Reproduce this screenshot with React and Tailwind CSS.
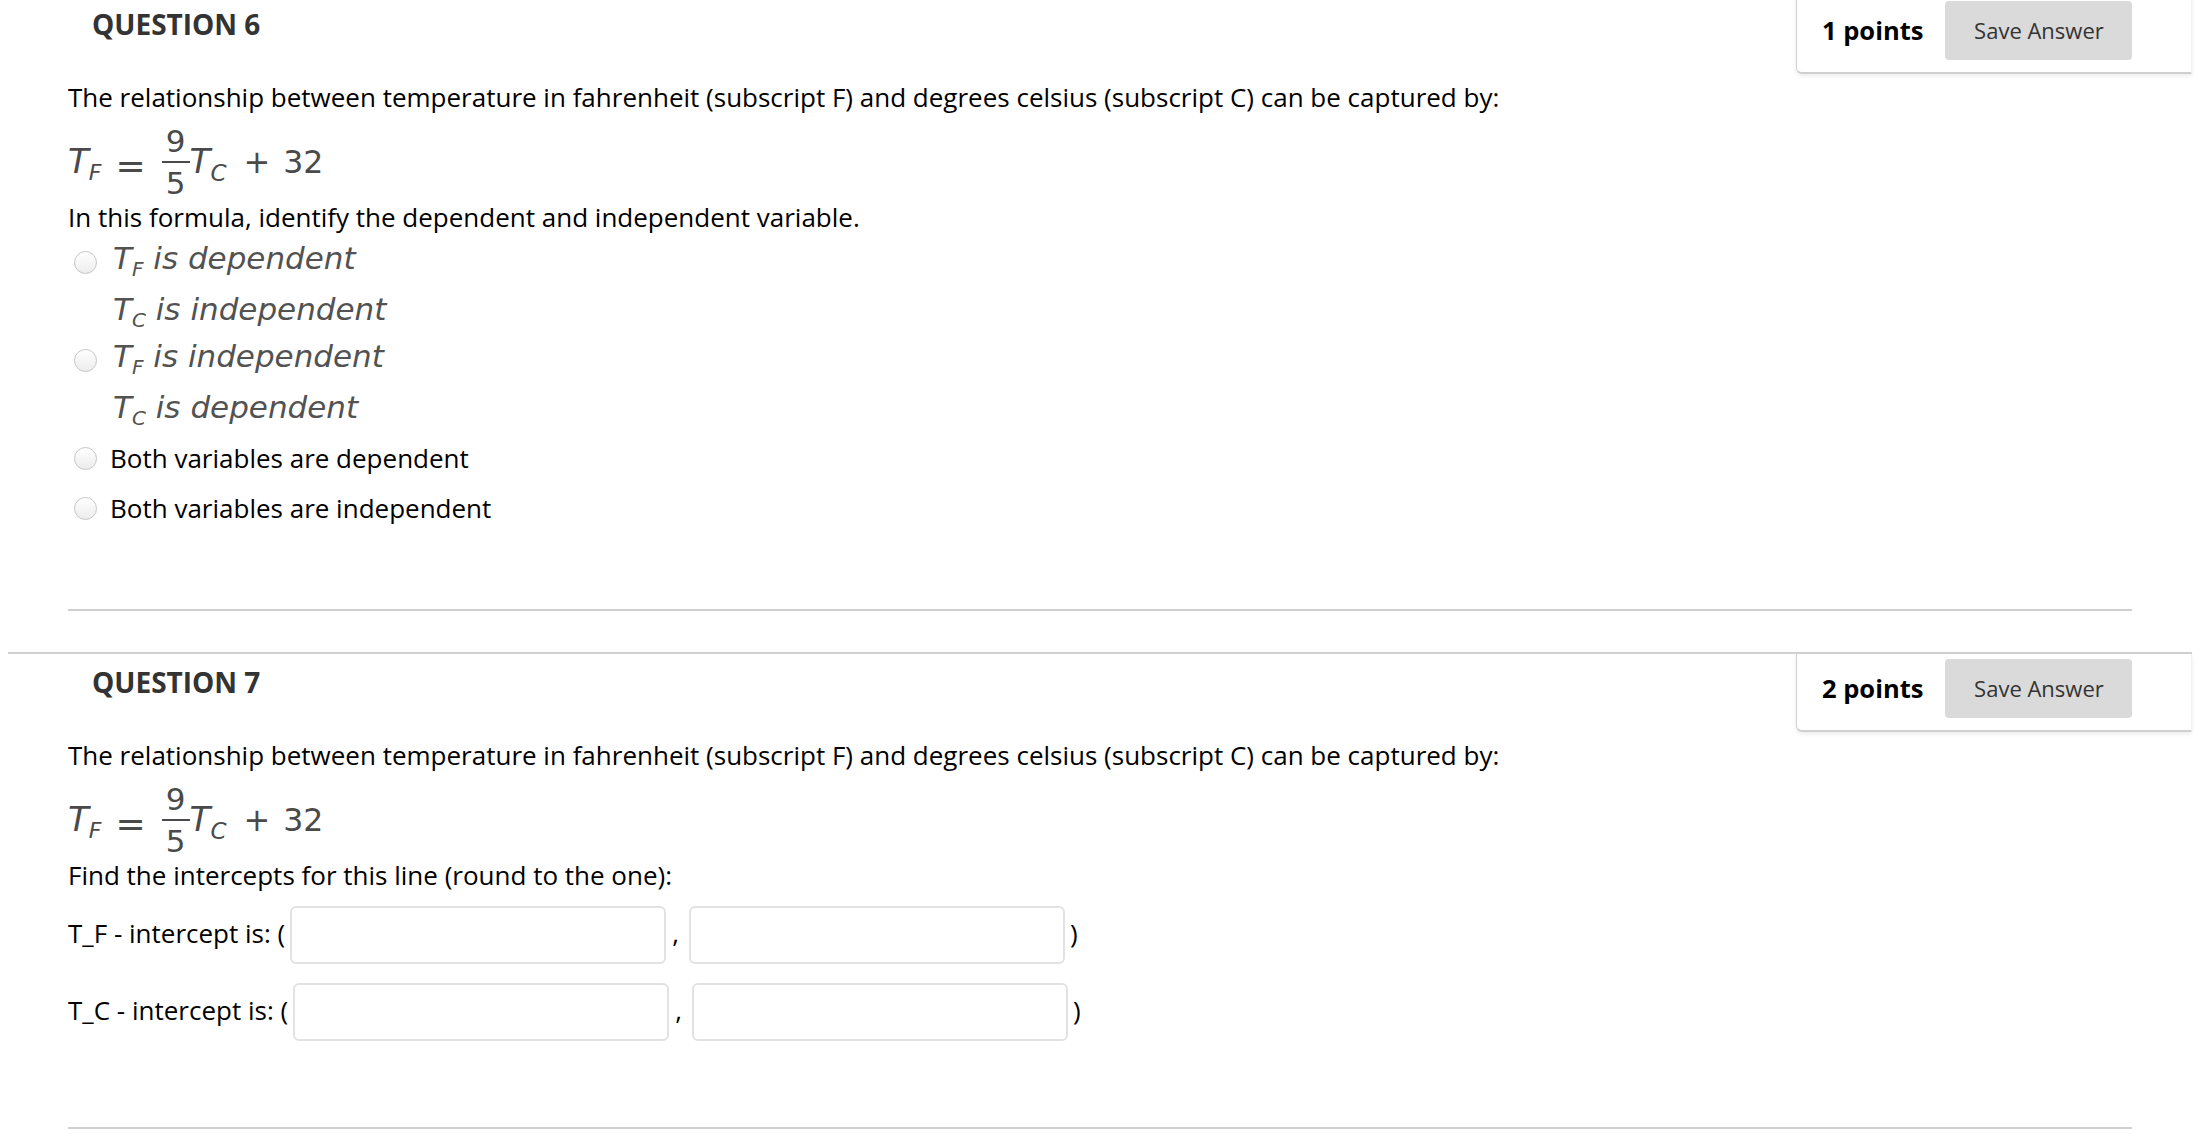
import React from 'react';

const sans = "font-['Open_Sans',sans-serif]";
const math = "font-['DejaVu_Sans',sans-serif]";

function Radio({ className = '' }) {
  return (
    <span
      className={
        'block h-[23px] w-[23px] shrink-0 rounded-full border border-[#c6c6c6] bg-linear-to-b from-white to-[#ececec] ' +
        className
      }
    />
  );
}

// inline T with a subscript, used in the answer options
function Tsub({ s }) {
  return (
    <>
      T<span className="relative top-[7px] text-[20px] leading-none">{s}</span>
    </>
  );
}

// T_F = 9/5 T_C + 32, laid on a shared baseline; the fraction hangs from the top
function Formula() {
  return (
    <div className={`mt-[12px] flex h-[72px] items-baseline pt-[16px] ${math} leading-none text-[#4a4a4a]`}>
      <span className="text-[34px] italic">T</span>
      <span className="relative top-[7px] text-[22px] italic">F</span>
      <span className="relative top-[5px] ml-[14px] text-[36px]">=</span>
      <span className="-mt-[17px] ml-[16px] flex w-[28px] flex-col items-center self-start text-[31px]">
        <span>9</span>
        <span className="mt-[4px] h-[2px] w-full bg-[#4a4a4a]" />
        <span className="mt-[5px]">5</span>
      </span>
      <span className="text-[34px] italic">T</span>
      <span className="relative top-[8px] text-[23px] italic">C</span>
      <span className="ml-[17px] text-[32px]">+</span>
      <span className="ml-[13px] text-[31.5px]">32</span>
    </div>
  );
}

function PointsBox({ points }) {
  return (
    <div className="flex h-[78px] w-[396px] shrink-0 items-start rounded-bl-[6px] border-b-2 border-l border-r border-b-[#cfcfcf] border-l-[#d2d2d2] border-r-[#f1f1f1] bg-white pl-[25px] shadow-[0_2px_4px_rgba(0,0,0,0.08)]">
      <div className="mt-[5px] flex h-[59px] items-center">
        <span className="text-[25.5px] font-bold text-black">{points} points</span>
        <button
          type="button"
          className="ml-[22px] h-[59px] w-[187px] rounded-[4px] bg-[#dadada] text-[22px] text-[#333]"
        >
          Save Answer
        </button>
      </div>
    </div>
  );
}

function Question({ num, points, children, className = '' }) {
  return (
    <section className={'ml-[8px] mr-[18px] border-t-2 border-[#d0d0d0] ' + className}>
      <div className="flex justify-between">
        <h2 className="pl-[84px] pt-[9px] text-[28px] leading-[38px] font-bold text-[#333]">QUESTION {num}</h2>
        <PointsBox points={points} />
      </div>
      <div className="px-[60px]">
        <p className="mt-[5px] leading-[36px] text-black">
          The relationship between temperature in fahrenheit (subscript F) and degrees celsius (subscript C) can be
          captured by:
        </p>
        <Formula />
        {children}
      </div>
    </section>
  );
}

function InterceptRow({ label, className = '' }) {
  return (
    <div className={'flex items-center ' + className}>
      <span className="mb-[4px] leading-[36px] whitespace-pre">{label} (</span>
      <input
        type="text"
        className="ml-[5px] h-[58px] w-[376px] rounded-[6px] border-2 border-[#e2e2e2] bg-white outline-none"
      />
      <span className="mb-[4px] ml-[6px] leading-[36px]">,</span>
      <input
        type="text"
        className="ml-[10px] h-[58px] w-[376px] rounded-[6px] border-2 border-[#e2e2e2] bg-white outline-none"
      />
      <span className="mb-[4px] ml-[5px] leading-[36px]">)</span>
    </div>
  );
}

export default function App() {
  return (
    <div className={`min-h-screen w-[2210px] overflow-hidden bg-white ${sans} text-[26px] text-black`}>
      <div className="-mt-[6px]">
        <Question num={6} points={1} className="pb-[41px]">
          <p className="leading-[36px]">In this formula, identify the dependent and independent variable.</p>

          <div className="flex items-start">
            <Radio className="ml-[6px] mt-[16px]" />
            <div className={`ml-[16px] ${math} text-[31px] italic leading-[47px] text-[#525252]`}>
              <div>
                <Tsub s="F" /> is dependent
              </div>
              <div className="mt-[4px]">
                <Tsub s="C" /> is independent
              </div>
            </div>
          </div>

          <div className="flex items-start">
            <Radio className="ml-[6px] mt-[16px]" />
            <div className={`ml-[16px] ${math} text-[31px] italic leading-[47px] text-[#525252]`}>
              <div>
                <Tsub s="F" /> is independent
              </div>
              <div className="mt-[4px]">
                <Tsub s="C" /> is dependent
              </div>
            </div>
          </div>

          <label className="mt-[2px] flex h-[50px] items-center">
            <Radio className="ml-[6px]" />
            <span className="ml-[13px]">Both variables are dependent</span>
          </label>
          <label className="flex h-[50px] items-center">
            <Radio className="ml-[6px]" />
            <span className="ml-[13px]">Both variables are independent</span>
          </label>

          <div className="mt-[76px] h-[2px] bg-[#d0d0d0]" />
        </Question>

        <Question num={7} points={2}>
          <p className="leading-[36px]">Find the intercepts for this line (round to the one):</p>
          <InterceptRow label="T_F - intercept is:" className="mt-[13px]" />
          <InterceptRow label="T_C - intercept is:" className="mt-[19px]" />
          <div className="mt-[86px] h-[2px] bg-[#d0d0d0]" />
        </Question>
      </div>
    </div>
  );
}
